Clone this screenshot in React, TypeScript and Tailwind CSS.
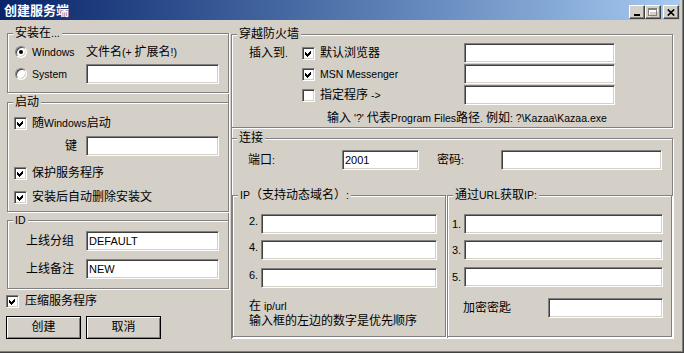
import React from 'react';

// Latin runs are drawn a bit smaller than CJK runs, like the old Tahoma/SimSun mix
const T = ({ s }: { s: string }) => (
  <>
    {s.split(/([\u2e80-\uffff]+)/).map((p, i) =>
      /[\u2e80-\uffff]/.test(p) ? (
        <span key={i}>{p}</span>
      ) : (
        <span key={i} className="text-[10.5px]">{p}</span>
      )
    )}
  </>
);

const Edit = ({ className = '', value = '' }: { className?: string; value?: string }) => (
  <input
    readOnly
    value={value}
    className={`h-[20px] shrink-0 bg-white border border-t-[#808080] border-l-[#808080] border-r-white border-b-white shadow-[inset_1px_1px_0_#404040,inset_-1px_-1px_0_#d4d0c8] px-[2px] text-[11px] text-black outline-none ${className}`}
  />
);

const Check = ({ on }: { on?: boolean }) => (
  <span className="flex h-[13px] w-[13px] shrink-0 items-center justify-center bg-white border border-t-[#808080] border-l-[#808080] border-r-white border-b-white shadow-[inset_1px_1px_0_#404040,inset_-1px_-1px_0_#d4d0c8]">
    {on && (
      <svg width="7" height="7" viewBox="0 0 7 7" shapeRendering="crispEdges">
        <path d="M0 2 L2 4 L6 0 L6 3 L2 7 L0 5 Z" fill="#000" />
      </svg>
    )}
  </span>
);

const Radio = ({ on }: { on?: boolean }) => (
  <span className="relative h-[12px] w-[12px] shrink-0 rounded-full bg-white border border-t-[#808080] border-l-[#808080] border-r-white border-b-white shadow-[inset_1px_1px_0_#404040,inset_-1px_-1px_0_#d4d0c8]">
    {on && <span className="absolute left-[3px] top-[3px] h-[4px] w-[4px] rounded-full bg-black" />}
  </span>
);

const Group = ({
  title,
  className = '',
  children,
}: {
  title: string;
  className?: string;
  children?: React.ReactNode;
}) => (
  <div className={`relative shrink-0 border border-[#808080] shadow-[inset_1px_1px_0_#fff,1px_1px_0_#fff] ${className}`}>
    <span className="absolute -top-[7px] left-[5px] whitespace-nowrap bg-[#d4d0c8] px-[2px] leading-[13px]">
      <T s={title} />
    </span>
    {children}
  </div>
);

const CapBtn = ({ children }: { children: React.ReactNode }) => (
  <span className="flex h-[14px] w-[16px] items-center justify-center bg-[#d4d0c8] border border-t-white border-l-white border-r-[#404040] border-b-[#404040] shadow-[inset_-1px_-1px_0_#808080]">
    {children}
  </span>
);

const Button = ({ label }: { label: string }) => (
  <button className="flex h-[23px] w-[75px] items-center justify-center border border-black bg-[#d4d0c8] shadow-[inset_1px_1px_0_#fff,inset_-1px_-1px_0_#808080]">
    {label}
  </button>
);

const CheckRow = ({ on, label, className = '' }: { on?: boolean; label: string; className?: string }) => (
  <div className={`flex h-[20px] items-center ${className}`}>
    <Check on={on} />
    <span className="ml-[5px] whitespace-nowrap">
      <T s={label} />
    </span>
  </div>
);

export default function App() {
  return (
    <div className="flex h-[353px] w-[684px] flex-col overflow-hidden bg-[#d4d0c8] font-['Liberation_Sans','Noto_Sans_CJK_SC',sans-serif] text-[12px] leading-[13px] text-black shadow-[inset_-1px_-1px_0_#404040,inset_-2px_-2px_0_#808080]">
      {/* title bar */}
      <div className="flex h-[20px] w-[680px] shrink-0 items-start bg-linear-to-r from-[#0a246a] to-[#a6caf0]">
        <span className="pl-[4px] pt-[3px] text-[13px] font-bold leading-[15px] text-white">创建服务端</span>
        <div className="ml-auto mr-[1px] mt-[5px] flex">
          <CapBtn>
            <svg width="8" height="8" viewBox="0 0 8 8" shapeRendering="crispEdges">
              <rect x="1" y="6" width="6" height="2" fill="#000" />
            </svg>
          </CapBtn>
          <CapBtn>
            <svg width="10" height="9" viewBox="0 0 10 9" shapeRendering="crispEdges">
              <path d="M1 1 H10 V9 H1 Z M1 2 H10 M1 3 H10" fill="none" stroke="#fff" strokeWidth="1" transform="translate(0.5 0.5)" />
              <rect x="0.5" y="0.5" width="8" height="7" fill="none" stroke="#808080" />
              <rect x="0" y="1" width="9" height="1" fill="#808080" />
            </svg>
          </CapBtn>
          <span className="ml-[2px]">
            <CapBtn>
              <svg width="8" height="7" viewBox="0 0 8 7">
                <path d="M0.8 0.5 L7.2 6.5 M7.2 0.5 L0.8 6.5" stroke="#000" strokeWidth="1.7" />
              </svg>
            </CapBtn>
          </span>
        </div>
      </div>

      <div className="flex gap-[2px] pl-[7px]">
        {/* left column */}
        <div className="mt-[13px] flex w-[222px] flex-col">
          <div className="flex w-[222px] flex-col border-r border-[#808080] shadow-[1px_0_0_#fff]">
            <Group title="安装在..." className="h-[60px] w-[222px] pl-[7px] pt-[8px]">
              <div className="flex h-[20px] items-center">
                <div className="flex w-[71px] items-center">
                  <Radio on />
                  <span className="ml-[5px]">
                    <T s="Windows" />
                  </span>
                </div>
                <span className="whitespace-nowrap">
                  <T s="文件名(+ 扩展名!)" />
                </span>
              </div>
              <div className="mt-[2px] flex h-[20px] items-center">
                <div className="flex w-[71px] items-center">
                  <Radio />
                  <span className="ml-[5px]">
                    <T s="System" />
                  </span>
                </div>
                <Edit className="w-[133px]" />
              </div>
            </Group>

            <Group title="启动" className="mt-[9px] h-[110px] w-[222px] pl-[6px] pt-[10px]">
              <CheckRow on label="随Windows启动" />
              <div className="mt-[3px] flex h-[20px] items-center">
                <span className="w-[72px] pl-[51px]">键</span>
                <Edit className="w-[133px]" />
              </div>
              <CheckRow on label="保护服务程序" className="mt-[7px]" />
              <CheckRow on label="安装后自动删除安装文" className="mt-[4px]" />
            </Group>

            <Group title="ID" className="mt-[8px] h-[69px] w-[222px] pl-[18px] pt-[10px]">
              <div className="flex h-[20px] items-center">
                <span className="w-[60px]">上线分组</span>
                <Edit className="w-[133px]" value="DEFAULT" />
              </div>
              <div className="mt-[8px] flex h-[20px] items-center">
                <span className="w-[60px]">上线备注</span>
                <Edit className="w-[133px]" value="NEW" />
              </div>
            </Group>
          </div>

          <div className="-ml-px mt-[6px] flex h-[13px] items-center">
            <Check on />
            <span className="ml-[6px]">压缩服务程序</span>
          </div>

          <div className="-ml-px mt-[8px] flex gap-[5px]">
            <Button label="创建" />
            <Button label="取消" />
          </div>
        </div>

        {/* right column */}
        <div className="mt-[14px] flex w-[442px] flex-col border-l border-[#808080] shadow-[inset_1px_0_0_#fff]">
          <Group title="穿越防火墙" className="-ml-px h-[94px] w-[442px] pl-[17px] pt-[8px]">
            <div className="flex h-[20px] items-center">
              <span className="w-[53px]">
                <T s="插入到." />
              </span>
              <Check on />
              <span className="ml-[5px] w-[144px]">默认浏览器</span>
              <Edit className="w-[151px]" />
            </div>
            <div className="mt-[1px] flex h-[20px] items-center">
              <span className="w-[53px]" />
              <Check on />
              <span className="ml-[5px] w-[144px]">
                <T s="MSN Messenger" />
              </span>
              <Edit className="w-[151px]" />
            </div>
            <div className="mt-[1px] flex h-[20px] items-center">
              <span className="w-[53px]" />
              <Check />
              <span className="ml-[5px] w-[144px]">
                <T s="指定程序 ->" />
              </span>
              <Edit className="w-[151px]" />
            </div>
            <div className="mt-[7px] whitespace-nowrap pl-[78px]">
              <T s={"输入 '?' 代表Program Files路径. 例如: ?\\Kazaa\\Kazaa.exe"} />
            </div>
          </Group>

          <Group title="连接" className="-ml-px mt-[10px] h-[200px] w-[442px] pt-[11px]">
            <div className="flex h-[20px] items-center pl-[16px]">
              <span className="w-[94px]">
                <T s="端口:" />
              </span>
              <Edit className="w-[77px]" value="2001" />
              <span className="ml-[18px] w-[64px]">
                <T s="密码:" />
              </span>
              <Edit className="w-[161px]" />
            </div>

            <div className="mt-[25px] flex gap-[1px]">
              <Group title="IP（支持动态域名）:" className="h-[142px] w-[214px] pl-[16px] pt-[18px]">
                {[
                  { n: '2.', mt: '' },
                  { n: '4.', mt: 'mt-[6px]' },
                  { n: '6.', mt: 'mt-[8px]' },
                ].map((r) => (
                  <div key={r.n} className={`flex h-[20px] items-center ${r.mt}`}>
                    <span className="mb-[6px] w-[12px] text-[11px]">{r.n}</span>
                    <Edit className="w-[176px]" />
                  </div>
                ))}
                <div className="mt-[11px] leading-[15px]">
                  <div>
                    <T s="在 ip/url" />
                  </div>
                  <div className="whitespace-nowrap">输入框的左边的数字是优先顺序</div>
                </div>
              </Group>

              <Group title="通过URL获取IP:" className="h-[142px] w-[225px] pl-[4px] pt-[18px]">
                {[
                  { n: '1.', mt: '' },
                  { n: '3.', mt: 'mt-[6px]' },
                  { n: '5.', mt: 'mt-[7px]' },
                ].map((r) => (
                  <div key={r.n} className={`flex h-[20px] items-center ${r.mt}`}>
                    <span className="w-[12px] text-[11px]">{r.n}</span>
                    <Edit className="w-[199px]" />
                  </div>
                ))}
                <div className="mt-[11px] flex h-[20px] items-center pl-[11px]">
                  <span className="w-[85px]">加密密匙</span>
                  <Edit className="w-[115px]" />
                </div>
              </Group>
            </div>
          </Group>
        </div>
      </div>
    </div>
  );
}
